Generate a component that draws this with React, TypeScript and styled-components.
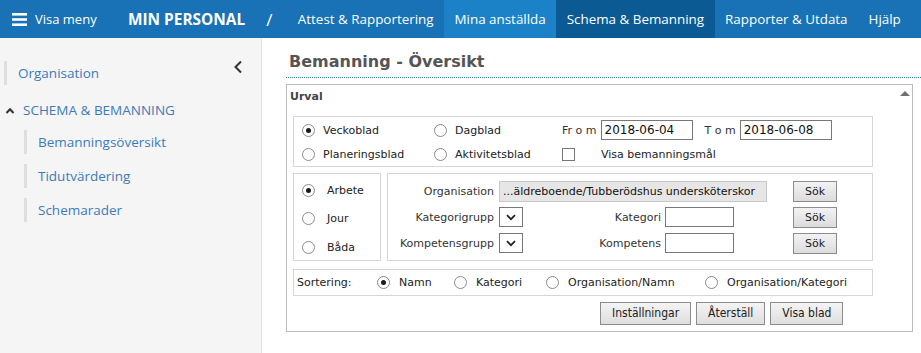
import React from 'react';
import styled, { createGlobalStyle } from 'styled-components';

const GlobalStyle = createGlobalStyle`
  html, body {
    margin: 0;
    padding: 0;
    background: #ffffff;
  }
  body {
    font-family: 'Open Sans', 'Noto Sans', sans-serif;
  }
`;

type NavTab = { label: string; tone: 'plain' | 'light' | 'active' };

const tabs: NavTab[] = [
  { label: 'Attest & Rapportering', tone: 'plain' },
  { label: 'Mina anställda', tone: 'light' },
  { label: 'Schema & Bemanning', tone: 'active' },
  { label: 'Rapporter & Utdata', tone: 'plain' },
  { label: 'Hjälp', tone: 'plain' },
];

const subItems = ['Bemanningsöversikt', 'Tidutvärdering', 'Schemarader'];

const sortOptions = ['Namn', 'Kategori', 'Organisation/Namn', 'Organisation/Kategori'];

function ChevronDown() {
  return (
    <svg width="10" height="7" viewBox="0 0 10 7">
      <path d="M1 1.2 L5 5.2 L9 1.2" stroke="#222" strokeWidth="1.8" fill="none" />
    </svg>
  );
}

export default function App(): JSX.Element {
  return (
    <>
      <GlobalStyle />
      <Page>
        <TopBar>
          <MenuToggle>
            <svg width="15" height="13" viewBox="0 0 15 13">
              <rect x="0" y="0" width="15" height="2.6" fill="#fff" />
              <rect x="0" y="5.2" width="15" height="2.6" fill="#fff" />
              <rect x="0" y="10.4" width="15" height="2.6" fill="#fff" />
            </svg>
            Visa meny
          </MenuToggle>
          <Brand>MIN PERSONAL</Brand>
          <Slash>/</Slash>
          <Tabs>
            {tabs.map((t) => (
              <Tab key={t.label} tone={t.tone}>
                {t.label}
              </Tab>
            ))}
          </Tabs>
        </TopBar>
        <Body>
          <Sidebar>
            <CollapseIcon>
              <svg width="10" height="14" viewBox="0 0 10 14">
                <path d="M8 1.5 L2.5 7 L8 12.5" stroke="#333" strokeWidth="2" fill="none" />
              </svg>
            </CollapseIcon>
            <NavLink level={0}>Organisation</NavLink>
            <Section>
              <svg width="10" height="7" viewBox="0 0 10 7">
                <path d="M1.5 6 L5 2.2 L8.5 6" stroke="#333" strokeWidth="2" fill="none" />
              </svg>
              SCHEMA &amp; BEMANNING
            </Section>
            {subItems.map((s) => (
              <NavLink key={s} level={1}>
                {s}
              </NavLink>
            ))}
          </Sidebar>
          <Main>
            <Heading>Bemanning - Översikt</Heading>
            <Panel>
              <PanelHead>
                <PanelTitle>Urval</PanelTitle>
                <CollapseArrow />
              </PanelHead>
              <Inner>
                <Group>
                  <SheetGrid>
                    <Option>
                      <Radio checked />
                      Veckoblad
                    </Option>
                    <Option>
                      <Radio />
                      Dagblad
                    </Option>
                    <DateRow>
                      <Label>Fr o m</Label>
                      <TextInput width={92}>2018-06-04</TextInput>
                      <Label second>T o m</Label>
                      <TextInput width={92}>2018-06-08</TextInput>
                    </DateRow>
                    <Option>
                      <Radio />
                      Planeringsblad
                    </Option>
                    <Option>
                      <Radio />
                      Aktivitetsblad
                    </Option>
                    <CheckRow>
                      <Checkbox />
                      Visa bemanningsmål
                    </CheckRow>
                  </SheetGrid>
                </Group>
                <FilterRow>
                  <TypeGroup>
                    <Option>
                      <Radio checked />
                      Arbete
                    </Option>
                    <Option>
                      <Radio />
                      Jour
                    </Option>
                    <Option>
                      <Radio />
                      Båda
                    </Option>
                  </TypeGroup>
                  <FieldGroup>
                    <FieldLabel>Organisation</FieldLabel>
                    <OrgField>...äldreboende/Tubberödshus undersköterskor</OrgField>
                    <SearchButton>Sök</SearchButton>

                    <FieldLabel>Kategorigrupp</FieldLabel>
                    <SplitCell>
                      <Select>
                        <ChevronDown />
                      </Select>
                      <FieldLabel>Kategori</FieldLabel>
                      <TextInput width={69} />
                    </SplitCell>
                    <SearchButton>Sök</SearchButton>

                    <FieldLabel>Kompetensgrupp</FieldLabel>
                    <SplitCell>
                      <Select>
                        <ChevronDown />
                      </Select>
                      <FieldLabel>Kompetens</FieldLabel>
                      <TextInput width={69} />
                    </SplitCell>
                    <SearchButton>Sök</SearchButton>
                  </FieldGroup>
                </FilterRow>
                <SortGroup>
                  <span>Sortering:</span>
                  {sortOptions.map((o, i) => (
                    <SortOption key={o}>
                      <Radio checked={i === 0} />
                      {o}
                    </SortOption>
                  ))}
                </SortGroup>
                <Actions>
                  <ActionButton>Inställningar</ActionButton>
                  <ActionButton>Återställ</ActionButton>
                  <ActionButton>Visa blad</ActionButton>
                </Actions>
              </Inner>
            </Panel>
          </Main>
        </Body>
      </Page>
    </>
  );
}

const Page = styled.div`
  width: 921px;
  height: 353px;
  display: flex;
  flex-direction: column;
  overflow: hidden;
`;

const TopBar = styled.header`
  height: 38px;
  flex: none;
  display: flex;
  align-items: stretch;
  background: #1872b5;
  color: #fff;
  white-space: nowrap;
`;

const MenuToggle = styled.div`
  display: flex;
  align-items: center;
  gap: 8px;
  padding-left: 12px;
  width: 116px;
  flex: none;
  font-size: 13px;
`;

const Brand = styled.div`
  display: flex;
  align-items: center;
  font-size: 15.4px;
  font-weight: 700;
`;

const Slash = styled.div`
  display: flex;
  align-items: center;
  padding: 0 15px 0 21px;
  font-size: 17px;
`;

const Tabs = styled.nav`
  display: flex;
`;

const Tab = styled.div<{ tone: NavTab['tone'] }>`
  display: flex;
  align-items: center;
  padding: 0 10.5px;
  font-size: 13.4px;
  background: ${(p) =>
    p.tone === 'active' ? '#0b5a93' : p.tone === 'light' ? '#1c82c7' : 'transparent'};
`;

const Body = styled.div`
  flex: 1;
  display: flex;
`;

const Sidebar = styled.aside`
  position: relative;
  width: 262px;
  flex: none;
  background: #f5f5f5;
  border-right: 1px solid #e2e2e2;
  padding-top: 23px;
  box-sizing: border-box;
`;

const CollapseIcon = styled.div`
  position: absolute;
  top: 19px;
  left: 233px;
`;

const NavLink = styled.div<{ level: number }>`
  margin-left: ${(p) => (p.level === 0 ? 4 : 24)}px;
  margin-bottom: ${(p) => (p.level === 0 ? 13 : 10)}px;
  padding-left: 11px;
  border-left: 3px solid #dedede;
  height: 24px;
  line-height: 24px;
  font-size: 13.5px;
  color: #3c7bb9;
`;

const Section = styled.div`
  display: flex;
  align-items: center;
  gap: 8px;
  padding-left: 5px;
  height: 24px;
  margin-bottom: 8px;
  font-size: 13.5px;
  color: #3c7bb9;
`;

const Main = styled.main`
  flex: 1;
  padding: 14px 0 0 24px;
  font-family: 'DejaVu Sans', Verdana, sans-serif;
  font-size: 11px;
  color: #222;
`;

const Heading = styled.h1`
  margin: 0;
  padding: 0 0 6px 3px;
  font-size: 16px;
  font-weight: 700;
  color: #555;
  border-bottom: 1px dotted #2a8aa8;
`;

const Panel = styled.section`
  margin-top: 6px;
  width: 627px;
  border: 1px solid #bcbcbc;
  box-sizing: border-box;
  padding: 0 0 6px 6px;
`;

const PanelHead = styled.div`
  display: flex;
  justify-content: space-between;
  align-items: center;
  height: 22px;
  padding-right: 2px;
  margin-left: -3px;
  margin-bottom: 9px;
`;

const PanelTitle = styled.span`
  font-weight: 700;
  color: #444;
`;

const CollapseArrow = styled.span`
  width: 0;
  height: 0;
  border-left: 5px solid transparent;
  border-right: 5px solid transparent;
  border-bottom: 5px solid #707070;
  margin-bottom: 6px;
`;

const Inner = styled.div`
  width: 580px;
  display: flex;
  flex-direction: column;
  gap: 6px;
`;

const Group = styled.div`
  border: 1px solid #d6d6d6;
  padding: 1px 8px 0 8px;
`;

const SheetGrid = styled.div`
  display: grid;
  grid-template-columns: 132px 128px 1fr;
  grid-auto-rows: 24px;
  align-items: center;
`;

const Option = styled.label`
  display: flex;
  align-items: center;
  gap: 8px;
  white-space: nowrap;
`;

const SortOption = styled(Option)`
  gap: 9px;
`;

const Radio = styled.span<{ checked?: boolean }>`
  width: 11px;
  height: 11px;
  border-radius: 50%;
  border: 1px solid #8a8a8a;
  background: #fff;
  flex: none;
  display: flex;
  align-items: center;
  justify-content: center;
  &::after {
    content: '';
    width: 5px;
    height: 5px;
    border-radius: 50%;
    background: ${(p) => (p.checked ? '#1a1a1a' : 'transparent')};
  }
`;

const DateRow = styled.div`
  display: flex;
  align-items: center;
  gap: 4px;
`;

const Label = styled.span<{ second?: boolean }>`
  color: #333;
  margin-left: ${(p) => (p.second ? 8 : 0)}px;
`;

const TextInput = styled.div<{ width: number }>`
  width: ${(p) => p.width}px;
  height: 20px;
  box-sizing: border-box;
  border: 1px solid #777;
  background: #fff;
  padding: 0 3px;
  line-height: 18px;
  font-size: 12px;
  color: #111;
`;

const CheckRow = styled.div`
  display: flex;
  align-items: center;
  gap: 26px;
`;

const Checkbox = styled.span`
  width: 11px;
  height: 11px;
  border: 1px solid #777;
  background: #fff;
`;

const FilterRow = styled.div`
  display: flex;
  gap: 6px;
  height: 88px;
`;

const TypeGroup = styled.div`
  width: 88px;
  box-sizing: border-box;
  border: 1px solid #d6d6d6;
  padding: 2px 8px;
  display: grid;
  grid-auto-rows: 28.5px;
  align-items: center;
  & label {
    gap: 12px;
  }
`;

const FieldGroup = styled.div`
  flex: 1;
  border: 1px solid #d6d6d6;
  padding: 4px 35px 4px 0;
  display: grid;
  grid-template-columns: 106px 268px 1fr;
  grid-auto-rows: 1fr;
  align-items: center;
  column-gap: 5px;
`;

const FieldLabel = styled.span`
  text-align: right;
  color: #333;
  white-space: nowrap;
`;

const OrgField = styled.div`
  height: 21px;
  box-sizing: border-box;
  border: 1px solid #c8c8c8;
  background: #e6e6e6;
  line-height: 19px;
  padding-left: 3px;
  white-space: nowrap;
  overflow: hidden;
  color: #111;
`;

const SplitCell = styled.div`
  display: grid;
  grid-template-columns: 24px 1fr 69px;
  align-items: center;
  column-gap: 4px;
  padding-right: 33px;
`;

const Select = styled.div`
  width: 24px;
  height: 20px;
  box-sizing: border-box;
  border: 1px solid #777;
  background: #fff;
  display: flex;
  align-items: center;
  justify-content: center;
`;

const SearchButton = styled.div`
  justify-self: end;
  width: 44px;
  height: 21px;
  box-sizing: border-box;
  border: 1px solid #8c8c8c;
  background: linear-gradient(#f2f2f2, #dcdcdc);
  text-align: center;
  line-height: 19px;
  color: #222;
`;

const SortGroup = styled.div`
  margin-top: 2px;
  border: 1px solid #d6d6d6;
  height: 27px;
  box-sizing: border-box;
  padding: 0 3px;
  display: grid;
  grid-template-columns: 80px 77px 92px 159px 1fr;
  align-items: center;
`;

const Actions = styled.div`
  display: flex;
  gap: 5px;
  padding-left: 307px;
`;

const ActionButton = styled.div`
  height: 23px;
  box-sizing: border-box;
  padding: 0 11px;
  border: 1px solid #8c8c8c;
  background: linear-gradient(#f4f4f4, #dedede);
  line-height: 21px;
  font-family: 'DejaVu Sans Condensed', Tahoma, sans-serif;
  font-size: 12px;
  color: #222;
`;
